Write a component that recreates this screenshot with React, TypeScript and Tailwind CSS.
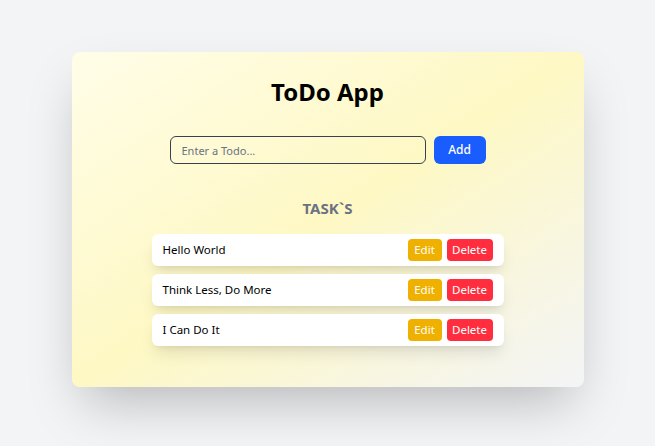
const todos = ["Hello World", "Think Less, Do More", "I Can Do It"];

export default function App() {
  return (
    <div
      className="min-h-screen bg-gray-100 pt-[52px]"
      style={{ fontFamily: '"Noto Sans", "Open Sans", sans-serif' }}
    >
      <div className="mx-auto w-[512px] h-[335px] rounded-lg bg-gradient-to-br from-[#fffde8] via-[#fef8c4] to-[#f3f4f6] shadow-2xl pt-[22px]">
        <h1 className="text-center text-[24px] font-bold text-black leading-[36px]">ToDo App</h1>

        {/* Input */}
        <div className="mt-[26px] flex justify-center gap-2">
          <input
            className="w-[256px] h-[28px] rounded-md border border-gray-700 bg-transparent px-[11px] text-[11px] outline-none placeholder:text-gray-500"
            placeholder="Enter a Todo..."
          />
          <button className="w-[52px] h-[28px] rounded-md bg-[#1a5dff] text-white text-[12px] font-medium">
            Add
          </button>
        </div>

        <h2 className="mt-[33px] text-center text-[15px] font-bold text-gray-500 leading-[22px]">TASK`S</h2>

        {/* Tasks */}
        <div className="mt-[15px] mx-auto w-[352px] flex flex-col gap-2">
          {todos.map((t) => (
            <div key={t} className="h-[32px] flex items-center justify-between rounded-md bg-white pl-[11px] pr-[11px] shadow-lg">
              <span className="text-[11.5px] text-black">{t}</span>
              <div className="flex gap-[5px]">
                <button className="w-[34px] h-[22px] rounded-sm bg-[#f0b000] text-white text-[11.5px]">Edit</button>
                <button className="w-[46px] h-[22px] rounded-sm bg-[#ff2d3d] text-white text-[11.5px]">Delete</button>
              </div>
            </div>
          ))}
        </div>
      </div>
    </div>
  );
}
